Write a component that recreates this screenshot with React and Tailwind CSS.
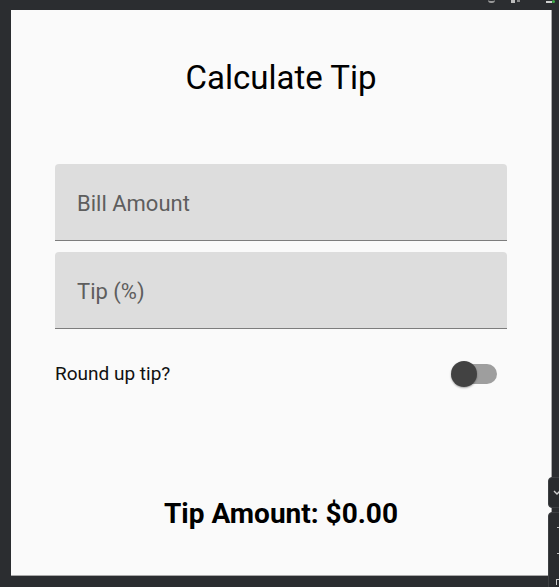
import React, { useState } from 'react';

const font = { fontFamily: 'Roboto, "Liberation Sans", sans-serif' };

const Field = ({ label }) => (
  <div className="h-[77px] w-full bg-[#dddddd] rounded-t-[4px] border-b border-[#7d7d7d] flex items-center pl-[22px] pt-[4px]">
    <span className="text-[22px] text-[#5e5e5e] leading-none">{label}</span>
  </div>
);

const App = () => {
  const [roundUp, setRoundUp] = useState(false);

  return (
    <div className="w-[559px] h-[587px] bg-[#2b2d30] relative overflow-hidden" style={font}>
      {/* status bar bits, cut off at the top */}
      <div className="absolute top-0 left-[488px] h-[3px] flex items-start gap-[16px]">
        <div className="w-[7px] h-[3px] border-b-2 border-[#9a9a9a] rounded-b-full" />
        <div className="flex gap-[2px]">
          <div className="w-[4px] h-[3px] bg-[#bdbdbd]" />
          <div className="w-[3px] h-[2px] bg-[#8a8a8a]" />
        </div>
        <div className="flex items-start ml-[10px]">
          <div className="w-[6px] h-[2px] mt-[1px] bg-[#d0d0d0]" />
          <div className="w-[3px] h-[3px] bg-[#3fae49] rounded-sm" />
        </div>
      </div>

      {/* app window */}
      <div className="absolute top-[10px] left-[11px] w-[541px] h-[566px] bg-[#fafafa] border-r border-b border-[#a9a9a9] flex flex-col px-[44px]">
        <h1 className="mt-[49px] text-[33px] leading-[38px] text-black text-center">Calculate Tip</h1>

        <div className="mt-[67px] flex flex-col gap-[11px]">
          <Field label="Bill Amount" />
          <Field label="Tip (%)" />
        </div>

        <div className="mt-[25px] h-[40px] flex items-center justify-between">
          <span className="text-[19px] text-[#111111]">Round up tip?</span>
          <button
            onClick={() => setRoundUp(!roundUp)}
            className="relative w-[46px] h-[28px] mr-[10px]"
          >
            <span className="absolute left-[6px] right-0 top-[4px] h-[20px] rounded-full bg-[#9e9e9e]" />
            <span
              className={`absolute top-[1px] w-[26px] h-[26px] rounded-full bg-[#424242] shadow-[0_1px_2px_rgba(0,0,0,0.35)] ${roundUp ? 'left-[20px]' : 'left-0'}`}
            />
          </button>
        </div>

        <p className="mt-[103px] text-[28px] leading-[33px] font-bold text-black text-center">
          Tip Amount: $0.00
        </p>
      </div>

      {/* emulator side toolbar, partly visible */}
      <div className="absolute left-[548px] top-[477px] flex flex-col gap-[4px]">
        <div className="w-[20px] h-[31px] rounded-[4px] bg-[#292b2e] border border-[#3d3f42] flex items-center pl-[4px]">
          <svg width="8" height="6" viewBox="0 0 8 6">
            <path d="M1 1l3 3 3-3" stroke="#cfcfcf" strokeWidth="1.4" fill="none" />
          </svg>
        </div>
        <div className="w-[20px] h-[90px] rounded-[4px] bg-[#292b2e] border border-[#3d3f42] flex flex-col items-center pt-[14px] gap-[25px] pl-[1px]">
          <div className="w-[4px] h-[1px] bg-[#bdbdbd]" />
          <div className="w-[4px] h-[1px] bg-[#bdbdbd]" />
          <div className="w-[5px] h-[6px] border-l border-t border-[#d0d0d0]" />
        </div>
      </div>
    </div>
  );
};

export default App;
